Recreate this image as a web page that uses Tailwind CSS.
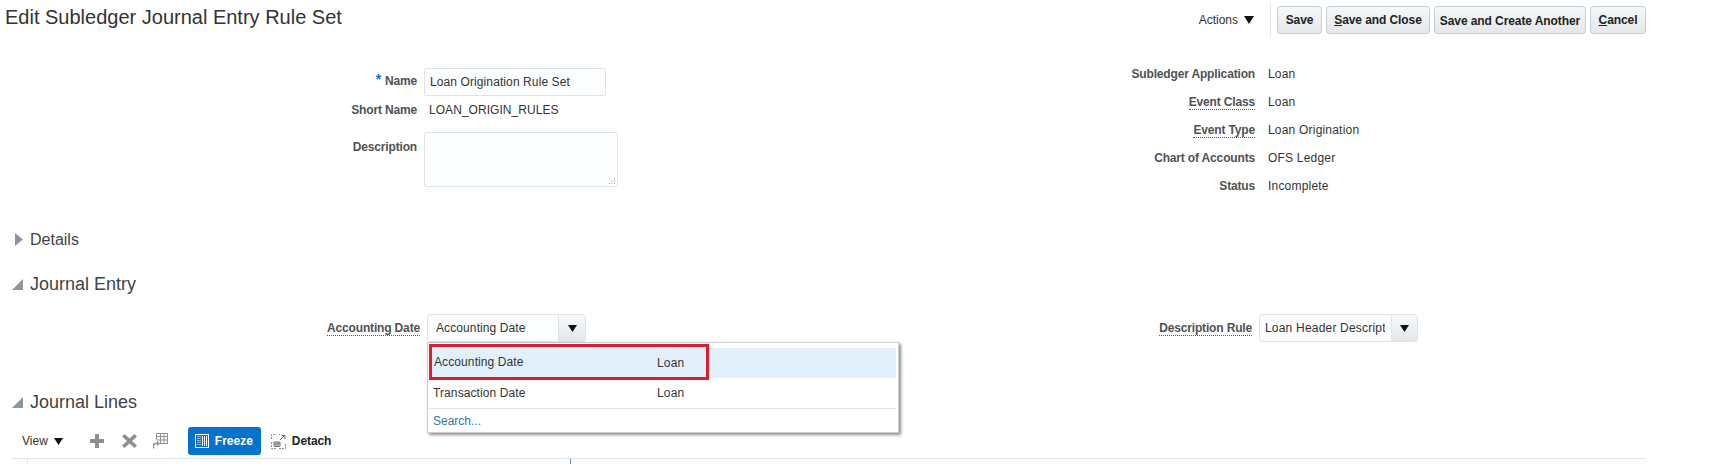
<!DOCTYPE html>
<html lang="en">
<head>
    <meta charset="UTF-8">
    <title>Edit Subledger Journal Entry Rule Set</title>
    <script src="https://cdn.jsdelivr.net/npm/@tailwindcss/browser@4"></script>
</head>
<body class="bg-white">
    <div class="w-[1735px] h-[464px] overflow-hidden font-['Liberation_Sans',Arial,sans-serif] text-[12px] text-[#333]">
        <!-- Page header -->
        <div class="flex justify-between h-[60px] pr-[89px]">
            <h1 class="pl-[5px] pt-[4px] text-[20px] leading-[26px] text-[#333]">Edit Subledger Journal Entry Rule Set</h1>
            <div class="flex items-start pt-[3px]">
                <div class="flex items-center h-[34px] text-[#333]">
                    <span>Actions</span>
                    <svg class="ml-[6px]" width="10" height="8" viewBox="0 0 10 8"><path d="M0 0h10L5 8z" fill="#111"/></svg>
                </div>
                <div class="w-px h-[34px] bg-[#dfe4ea] ml-[16px] mr-[6px]"></div>
                <div class="flex gap-[4px] pt-[3px] font-bold text-[#222] tracking-[-0.08px]">
                    <button class="w-[45px] h-[28px] rounded-[3px] border border-[#c4ced7] bg-gradient-to-b from-[#f6f8f9] to-[#e4e8eb]">Save</button>
                    <button class="w-[104px] h-[28px] rounded-[3px] border border-[#c4ced7] bg-gradient-to-b from-[#f6f8f9] to-[#e4e8eb]"><span class="underline">S</span>ave and Close</button>
                    <button class="w-[152px] h-[28px] pt-[2px] rounded-[3px] border border-[#c4ced7] bg-gradient-to-b from-[#f6f8f9] to-[#e4e8eb]">Save and Create Another</button>
                    <button class="w-[56px] h-[28px] rounded-[3px] border border-[#c4ced7] bg-gradient-to-b from-[#f6f8f9] to-[#e4e8eb]"><span class="underline">C</span>ancel</button>
                </div>
            </div>
        </div>

        <!-- Rule set form -->
        <div class="flex h-[140px]">
            <div class="w-[1000px] pt-[8px]">
                <div class="flex items-center h-[28px]">
                    <div class="w-[417px] -mt-[2px] text-right font-bold text-[#4f5254] tracking-[-0.16px]"><span class="text-[14px] leading-[12px] text-[#0572ce] align-[1px] mr-[4px]">*</span>Name</div>
                    <div class="ml-[7px] w-[182px] h-[28px] flex items-center pl-[5px] border border-[#dfe4ea] rounded-[2px] bg-[#fcfdfe] tracking-[0.1px]">Loan Origination Rule Set</div>
                </div>
                <div class="flex items-center h-[28px]">
                    <div class="w-[417px] text-right font-bold text-[#4f5254] tracking-[-0.16px]">Short Name</div>
                    <div class="ml-[12px] tracking-[0.05px]">LOAN_ORIGIN_RULES</div>
                </div>
                <div class="flex items-start mt-[8px]">
                    <div class="w-[417px] text-right font-bold text-[#4f5254] pt-[6px] tracking-[-0.16px]">Description</div>
                    <div class="relative ml-[7px] w-[194px] h-[55px] border border-[#dfe4ea] rounded-[2px] bg-[#fcfdfe]">
                        <svg class="absolute right-[1px] bottom-[1px]" width="8" height="8" viewBox="0 0 8 8"><path d="M6 1h1v1H6zM6 3.500h1v1H6zM6 6h1v1H6zM3.500 3.500h1v1h-1zM3.500 6h1v1h-1zM1 6h1v1H1z" fill="#9a9fa3"/></svg>
                    </div>
                </div>
            </div>
            <div>
                <div class="flex items-center h-[28px]">
                    <div class="w-[255px] text-right font-bold text-[#4f5254] tracking-[-0.16px]">Subledger Application</div>
                    <div class="ml-[13px] tracking-[0.2px]">Loan</div>
                </div>
                <div class="flex items-center h-[28px]">
                    <div class="w-[255px] text-right font-bold text-[#4f5254] tracking-[-0.16px]"><span class="border-b border-dotted border-[#555]">Event Class</span></div>
                    <div class="ml-[13px] tracking-[0.2px]">Loan</div>
                </div>
                <div class="flex items-center h-[28px]">
                    <div class="w-[255px] text-right font-bold text-[#4f5254] tracking-[-0.16px]"><span class="border-b border-dotted border-[#555]">Event Type</span></div>
                    <div class="ml-[13px] tracking-[0.2px]">Loan Origination</div>
                </div>
                <div class="flex items-center h-[28px]">
                    <div class="w-[255px] text-right font-bold text-[#4f5254] tracking-[-0.16px]">Chart of Accounts</div>
                    <div class="ml-[13px] tracking-[0.2px]">OFS Ledger</div>
                </div>
                <div class="flex items-center h-[28px]">
                    <div class="w-[255px] text-right font-bold text-[#4f5254] tracking-[-0.16px]">Status</div>
                    <div class="ml-[13px] tracking-[0.2px]">Incomplete</div>
                </div>
            </div>
        </div>

        <!-- Details -->
        <div class="flex items-center h-[24px] mt-[28px] text-[16px] text-[#3f4346]">
            <svg class="ml-[15px] -mt-[2px]" width="8" height="13" viewBox="0 0 8 13"><path d="M0 0l8 6.500L0 13z" fill="#8f9498"/></svg>
            <span class="ml-[7px]">Details</span>
        </div>

        <!-- Journal Entry -->
        <div class="flex items-center h-[24px] mt-[20px] text-[18px] text-[#3f4346]">
            <svg class="ml-[12px]" width="11" height="11" viewBox="0 0 11 11"><path d="M11 0v11H0z" fill="#8f9498"/></svg>
            <span class="ml-[7px]">Journal Entry</span>
        </div>
        <div class="relative flex mt-[18px] h-[28px]">
            <div class="flex items-center w-[1000px]">
                <div class="w-[420px] text-right font-bold text-[#4f5254] tracking-[-0.16px]"><span class="border-b border-dotted border-[#555]">Accounting Date</span></div>
                <div class="ml-[7px] flex w-[159px] h-[28px] border border-[#dfe4ea] rounded-[3px] bg-[#fcfdfe]">
                    <div class="flex-1 flex items-center pl-[8px] tracking-[0.1px]">Accounting Date</div>
                    <div class="w-[27px] flex items-center justify-center border-l border-[#dfe4ea] bg-gradient-to-b from-[#f6f8f9] to-[#e4e8eb]">
                        <svg width="9" height="7" viewBox="0 0 9 7"><path d="M0 0h9L4.500 7z" fill="#111"/></svg>
                    </div>
                </div>
            </div>
            <div class="flex items-center">
                <div class="w-[252px] text-right font-bold text-[#4f5254] tracking-[-0.16px]"><span class="border-b border-dotted border-[#555]">Description Rule</span></div>
                <div class="ml-[7px] flex w-[159px] h-[28px] border border-[#dfe4ea] rounded-[3px] bg-[#fcfdfe]">
                    <div class="w-[131px] flex items-center pl-[5px] overflow-hidden whitespace-nowrap">
                        <span class="w-[120px] overflow-hidden tracking-[0.2px]">Loan Header Descript</span>
                    </div>
                    <div class="flex-1 flex items-center justify-center border-l border-[#dfe4ea] bg-gradient-to-b from-[#f6f8f9] to-[#e4e8eb]">
                        <svg width="9" height="7" viewBox="0 0 9 7"><path d="M0 0h9L4.500 7z" fill="#111"/></svg>
                    </div>
                </div>
            </div>

            <!-- Open list of values -->
            <div class="absolute z-10 left-[427px] top-[28px] w-[472px] h-[91px] bg-white border border-[#c4ced7] shadow-[2px_2px_3px_rgba(0,0,0,0.45)] pt-[5px] pl-[1px] pr-[2px]">
                <div class="relative flex items-center h-[30px] bg-[#e2f0fb]">
                    <span class="ml-[5px] w-[223px] -mt-[3px] tracking-[0.1px]">Accounting Date</span><span class="tracking-[0.2px]">Loan</span>
                    <div class="absolute left-0 -top-[4px] w-[280px] h-[36px] border-[3px] border-[#dc1f2e]"></div>
                </div>
                <div class="flex items-center h-[30px]">
                    <span class="ml-[4px] w-[224px] tracking-[0.1px]">Transaction Date</span><span class="tracking-[0.2px]">Loan</span>
                </div>
                <div class="h-[25px] flex items-center pl-[4px] border-t border-[#dfe4ea] text-[#2e78ad]">Search...</div>
            </div>
        </div>

        <!-- Journal Lines -->
        <div class="flex items-center h-[24px] mt-[48px] text-[18px] text-[#3f4346]">
            <svg class="ml-[12px]" width="11" height="11" viewBox="0 0 11 11"><path d="M11 0v11H0z" fill="#8f9498"/></svg>
            <span class="ml-[7px]">Journal Lines</span>
        </div>
        <div class="flex items-center h-[28px] mt-[13px] pl-[22px]">
            <span>View</span>
            <svg class="ml-[6px]" width="9" height="7" viewBox="0 0 9 7"><path d="M0 0h9L4.500 7z" fill="#111"/></svg>
            <svg class="ml-[27px]" width="14" height="14" viewBox="0 0 14 14"><path d="M5 0h4v5h5v4H9v5H5V9H0V5h5z" fill="#8b9094"/></svg>
            <svg class="ml-[18px]" width="15" height="14" viewBox="0 0 15 14"><path d="M2.500 0L7.500 4.500 12.500 0 15 2.500 10 7l5 4.500-2.500 2.500-5-4.500-5 4.500L0 11.500 5 7 0 2.500z" fill="#8b9094"/></svg>
            <svg class="ml-[16px]" width="15" height="16" viewBox="0 0 15 16" fill="none" stroke="#8b9094"><path d="M3.500.5h11v10h-8M3.500.5v6M3.500 3.500h11M3.500 7h11M7.500 .5v10M11 .5v10"/><path d="M.5 15.500v-3c0-1.200 1-2 2.500-2h2" stroke-width="1.600"/><path d="M4 8l3 2.500L4 13z" fill="#8b9094" stroke="none"/></svg>
            <button class="ml-[20px] flex items-center w-[73px] h-[28px] pl-[7px] rounded-[3px] bg-[#0572ce] text-white font-bold">
                <svg width="14" height="14" viewBox="0 0 14 14" fill="none" stroke="#fff"><rect x=".5" y=".5" width="13" height="13"/><path d="M3 2v10M5 2v10" stroke-dasharray="1 1"/><path d="M7.500 2v10M9.500 2v10M11.500 2v10"/></svg>
                <span class="ml-[6px]">Freeze</span>
            </button>
            <svg class="ml-[10px]" width="15" height="15" viewBox="0 0 15 15" fill="none" stroke="#8b9094"><path d="M.5 5V.5h5M8 .5h1M.5 8v6.500h5M8 14.500h6.500V10" stroke-dasharray="2 1"/><path d="M9 6l4-4M10.500 1.500h3.500v3.500" stroke="#666"/><path d="M3 8h6v4.500H3zM3 10h6M5 8v4.500M7 8v4.500" stroke="#777"/></svg>
            <span class="ml-[6px] font-bold text-[#222] tracking-[-0.08px]">Detach</span>
        </div>

        <!-- Table header edge -->
        <div class="relative mt-[3px] ml-[11px] w-[1635px] h-[6px] border-t border-[#dfe4ea]">
            <div class="absolute left-[16px] top-0 w-px h-[6px] bg-[#dfe4ea]"></div>
            <div class="absolute left-[559px] top-0 w-px h-[6px] bg-[#5a8fb5]"></div>
        </div>
    </div>
</body>
</html>
